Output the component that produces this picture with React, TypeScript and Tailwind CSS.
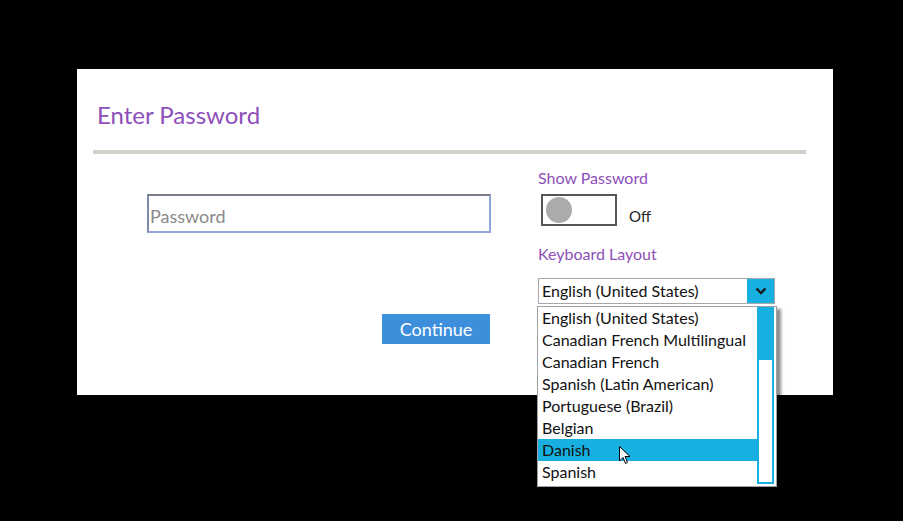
import React from "react";

const items = [
  "English (United States)",
  "Canadian French Multilingual",
  "Canadian French",
  "Spanish (Latin American)",
  "Portuguese (Brazil)",
  "Belgian",
  "Danish",
  "Spanish",
];

export default function App() {
  return (
    <div
      className="relative w-[903px] h-[521px] bg-black overflow-hidden"
      style={{ fontFamily: 'Lato, "Noto Sans", sans-serif' }}
    >
      <div className="absolute left-[77px] top-[69px] w-[756px] h-[326px] bg-white">
        <div className="pl-[20px] pt-[28px] h-[81px] text-[24px] leading-[36px] text-[#8d4fb9]">
          Enter Password
        </div>
        <div className="ml-[16px] w-[713px] h-[4px] bg-[#d3d0ca]" />
        <div className="flex">
          <div className="w-[461px] flex flex-col">
            <div className="ml-[70px] mt-[40px] w-[344px] h-[39px] border-2 border-[#8fa6d6] border-t-[#7c7c8c] border-l-[#7f8aa8] flex items-center pl-[1px] pt-[6px] text-[18px] text-[#8a8a8a]">
              Password
            </div>
            <div className="ml-[305px] mt-[81px] w-[108px] h-[30px] bg-[#3d8fdc] text-white text-[18px] leading-[30px] text-center">
              Continue
            </div>
          </div>
          <div className="flex flex-col">
            <div className="mt-[12px] h-[24px] text-[16px] leading-[24px] text-[#8d4fb9]">
              Show Password
            </div>
            <div className="mt-[4px] flex items-end">
              <div className="ml-[3px] w-[76px] h-[32px] border-2 border-[#555] flex items-center pl-[3px]">
                <div className="w-[26px] h-[26px] rounded-full bg-[#ababab]" />
              </div>
              <div className="ml-[12px] text-[15px] leading-[20px] text-[#222]">Off</div>
            </div>
            <div className="mt-[16px] h-[24px] text-[16px] leading-[24px] text-[#8d4fb9]">
              Keyboard Layout
            </div>
            <div className="mt-[12px] w-[237px] h-[26px] border border-[#a8a8a8] flex">
              <div className="flex-1 pl-[3px] text-[16px] leading-[24px] text-[#111] whitespace-nowrap">
                English (United States)
              </div>
              <div className="w-[27px] h-[24px] bg-[#18b0e0] flex items-center justify-center">
                <svg width="12" height="8" viewBox="0 0 12 8">
                  <path d="M1.5 1.5 L6 6 L10.5 1.5" fill="none" stroke="#1a1a1a" strokeWidth="2.4" />
                </svg>
              </div>
            </div>
          </div>
        </div>
      </div>

      <div className="absolute left-[537px] top-[306px] w-[240px] h-[181px] bg-white border border-[#a0a0a0] shadow-[4px_3px_3px_rgba(0,0,0,0.45)] flex">
        <div className="flex-1 flex flex-col">
          {items.map((it) => (
            <div
              key={it}
              className={
                "h-[22px] pl-[4px] text-[16px] leading-[22px] text-[#111] whitespace-nowrap " +
                (it === "Danish" ? "bg-[#18b0e0]" : "")
              }
            >
              {it}
            </div>
          ))}
        </div>
        <div className="w-[17px] mr-[2px] mb-[2px] border-2 border-[#18b0e0] flex flex-col">
          <div className="h-[51px] bg-[#18b0e0]" />
        </div>
      </div>

      <svg className="absolute left-[619px] top-[446px]" width="12" height="19" viewBox="0 0 12 19">
        <path d="M0.5 0.5 L0.5 15 L4 11.5 L6.5 17.5 L8.5 16.5 L6 10.5 L11 10.5 Z" fill="white" stroke="black" strokeWidth="1" />
      </svg>
    </div>
  );
}
